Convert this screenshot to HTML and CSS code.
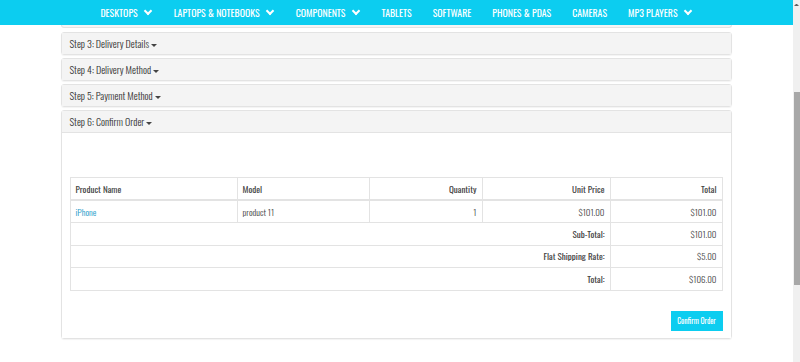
FILE: index.html
```
<!DOCTYPE html>
<html lang="en">
<head>
  <meta charset="UTF-8">
  <meta name="viewport" content="width=device-width, initial-scale=1.0">
  <title>Checkout</title>
  <link rel="stylesheet" href="styles.css">
</head>
<body>
  <div class="page">
    <!-- Menu -->
    <nav class="menu">
      <a href="#">DESKTOPS <span class="chev"></span></a>
      <a href="#">LAPTOPS &amp; NOTEBOOKS <span class="chev"></span></a>
      <a href="#">COMPONENTS <span class="chev"></span></a>
      <a href="#">TABLETS</a>
      <a href="#">SOFTWARE</a>
      <a href="#">PHONES &amp; PDAS</a>
      <a href="#">CAMERAS</a>
      <a href="#">MP3 PLAYERS <span class="chev"></span></a>
    </nav>

    <main class="container">
      <div class="panel-tail"></div>

      <div class="panel">
        <div class="panel-heading">Step 3: Delivery Details <span class="caret"></span></div>
      </div>
      <div class="panel">
        <div class="panel-heading">Step 4: Delivery Method <span class="caret"></span></div>
      </div>
      <div class="panel">
        <div class="panel-heading">Step 5: Payment Method <span class="caret"></span></div>
      </div>

      <!-- Passo final -->
      <div class="panel">
        <div class="panel-heading">Step 6: Confirm Order <span class="caret"></span></div>
        <div class="panel-body">
          <table class="order">
            <thead>
              <tr>
                <td class="c-name">Product Name</td>
                <td class="c-model">Model</td>
                <td class="right c-qty">Quantity</td>
                <td class="right c-price">Unit Price</td>
                <td class="right c-total">Total</td>
              </tr>
            </thead>
            <tbody>
              <tr>
                <td><a href="#">iPhone</a></td>
                <td>product 11</td>
                <td class="right">1</td>
                <td class="right">$101.00</td>
                <td class="right">$101.00</td>
              </tr>
            </tbody>
            <tfoot>
              <tr>
                <td colspan="4" class="right"><strong>Sub-Total:</strong></td>
                <td class="right">$101.00</td>
              </tr>
              <tr>
                <td colspan="4" class="right"><strong>Flat Shipping Rate:</strong></td>
                <td class="right">$5.00</td>
              </tr>
              <tr>
                <td colspan="4" class="right"><strong>Total:</strong></td>
                <td class="right">$106.00</td>
              </tr>
            </tfoot>
          </table>
          <div class="buttons">
            <button type="button">Confirm Order</button>
          </div>
        </div>
      </div>
    </main>
  </div>

  <div class="scrollbar">
    <div class="scroll-up"></div>
    <div class="scroll-thumb"></div>
  </div>
</body>
</html>
```

FILE: styles.css
```
* {
  margin: 0;
  padding: 0;
  box-sizing: border-box;
}

html, body {
  height: 362px;
  overflow: hidden;
}

body {
  display: flex;
  font-family: "Oswald", "DejaVu Sans Condensed", sans-serif;
  font-size: 11px;
  color: #555;
  background-color: #fff;
}

.page {
  flex: 1;
}

/* Menu */
.menu {
  display: flex;
  justify-content: center;
  gap: 21px;
  height: 25px;
  align-items: center;
  background-color: #0ccdf0;
}

.menu a {
  color: #fff;
  font-weight: 400;
  font-size: 9.8px;
  text-decoration: none;
  display: flex;
  align-items: center;
  gap: 5px;
}

.chev {
  width: 6px;
  height: 6px;
  border-right: 2px solid #fff;
  border-bottom: 2px solid #fff;
  transform: rotate(45deg);
  margin: -3px 2px 0 2px;
}

/* Paineis */
.container {
  width: 672px;
  margin: 0 auto;
  padding-right: 1px;
}

.panel-tail {
  height: 3px;
  background-color: #f5f5f5;
  border: 1px solid #e3e3e3;
  border-top: none;
  border-radius: 0 0 3px 3px;
  margin-bottom: 4px;
}

.panel {
  border: 1px solid #e3e3e3;
  border-radius: 3px;
  margin-bottom: 3px;
  box-shadow: 0 1px 1px rgba(0, 0, 0, 0.05);
}

.panel-heading {
  background-color: #f4f4f4;
  color: #333;
  height: 21px;
  line-height: 21px;
  padding: 0 8px;
  font-size: 10px;
  font-weight: 300;
}

.caret {
  display: inline-block;
  width: 0;
  height: 0;
  border-top: 3px solid #444;
  border-left: 3px solid transparent;
  border-right: 3px solid transparent;
  vertical-align: middle;
}

.panel-body {
  border-top: 1px solid #e3e3e3;
  padding: 44px 8px 7px 8px;
  background-color: #fff;
}

/* Tabela do pedido */
.order {
  width: 100%;
  border-collapse: collapse;
  border: 1px solid #e3e3e3;
}

.order td {
  border: 1px solid #e3e3e3;
  height: 22.5px;
  padding: 0 5px;
  font-size: 9px;
  font-weight: 300;
  color: #444;
}

.order thead td {
  font-weight: 400;
  border-bottom-width: 2px;
}

.order strong {
  color: #444;
  font-weight: 400;
}

.order a {
  color: #229ac8;
  text-decoration: none;
}

.c-name { width: 167px; }
.c-model { width: 132px; }
.c-qty { width: 113px; }
.c-price { width: 128px; }

.right {
  text-align: right;
}

.buttons {
  display: flex;
  justify-content: flex-end;
  margin-top: 20px;
}

.buttons button {
  background-color: #0ccdf0;
  color: #fff;
  border: none;
  font-family: inherit;
  font-size: 7.5px;
  font-weight: 400;
  width: 52px;
  height: 20px;
}

/* Barra de rolagem */
.scrollbar {
  width: 7px;
  background-color: #f0f0f0;
  display: flex;
  flex-direction: column;
}

.scroll-up {
  height: 4px;
  margin: 2px 1px 0 1px;
  border-bottom: 2px solid #606060;
  border-left: 2px solid transparent;
  border-right: 2px solid transparent;
}

.scroll-thumb {
  height: 193px;
  margin: 86px 0 0 1px;
  background-color: #a8a8a8;
}
```
